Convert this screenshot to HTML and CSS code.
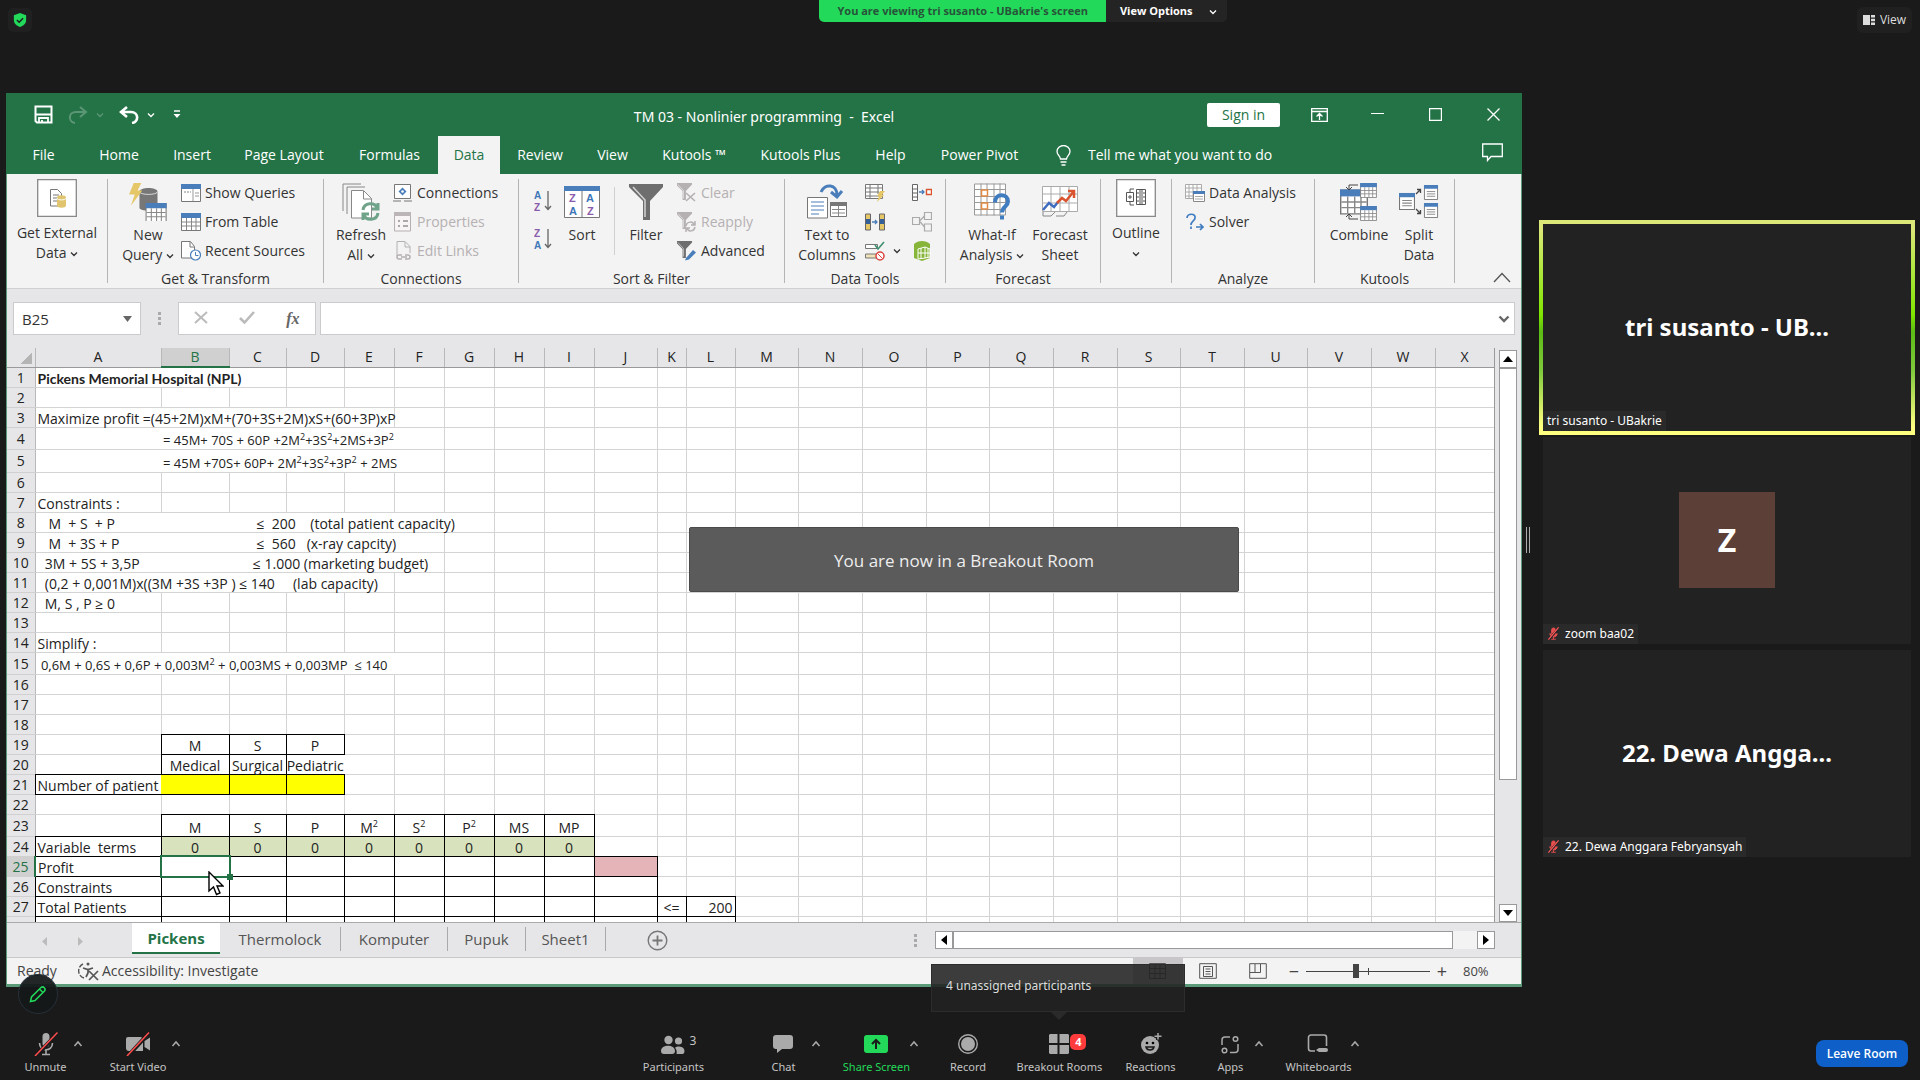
FILE: index.html
```html
<!DOCTYPE html>
<html lang="en">
<head>
    <meta charset="UTF-8">
    <meta name="viewport" content="width=device-width, initial-scale=1.0">
    <title>Zoom Meeting</title>
    <link rel="stylesheet" href="styles.css">
</head>
<body>
    <svg class="sprite" aria-hidden="true">
        <symbol id="down" viewBox="0 0 8 6"><path d="M1 1.5l3 3 3-3" fill="none" stroke="currentColor" stroke-width="1.3"/></symbol>
        <symbol id="up" viewBox="0 0 10 8"><path d="M1.5 6L5 2l3.5 4" fill="none" stroke="currentColor" stroke-width="1.5"/></symbol>
        <symbol id="muted" viewBox="0 0 12 14">
            <path d="M4 3a2 2 0 0 1 4 0v4a2 2 0 0 1-4 0zM2 7c0 5 8 5 8 0M6 11v2M3.5 13.2h5" fill="#e8504f" stroke="#e8504f" stroke-width="1"/>
            <path d="M11.5 1L1 13.5" stroke="#222" stroke-width="2.5"/><path d="M11.5 .5L.5 13.5" stroke="#ff5a5a" stroke-width="1.3"/>
        </symbol>
        <symbol id="minitable" viewBox="0 0 20 18">
            <path d="M.5 .5h19v17H.5z" fill="#fff" stroke="#777"/><path d="M0 0h20v5H0z" fill="#4a7ebb"/>
            <path d="M1 9h18M1 13h18M5.5 5v12M10.5 5v12M15 5v12" stroke="#888" fill="none"/>
        </symbol>
        <symbol id="minilist" viewBox="0 0 15 16">
            <path d="M.5 .5h14v15H.5z" fill="#fff" stroke="#777"/><path d="M0 0h15v4H0z" fill="#4a7ebb"/>
            <path d="M3 7h9M3 9.5h9M3 12h9" stroke="#888"/>
        </symbol>
        <symbol id="funnel" viewBox="0 0 34 36"><path d="M0 0h34v3L21 17v19h-7V17L0 3z" fill="currentColor"/><path d="M4 3l12 13v17" fill="none" stroke="#fff" stroke-width="1.5" opacity=".7"/></symbol>
    </svg>

    <header class="top">
        <button class="shield" aria-label="Meeting information"><svg width="14" height="14" viewBox="0 0 16 16"><path d="M8 0l7 2.5V8c0 4-3 6.5-7 8-4-1.5-7-4-7-8V2.5z" fill="#23d959"/><path d="M4.5 8l2.5 2.5L11.5 6" fill="none" stroke="#1a1a1a" stroke-width="1.6"/></svg></button>
        <div class="banner">
            <p class="viewing">You are viewing tri susanto - UBakrie's screen</p>
            <button class="options">View Options <svg class="caret"><use href="#down"/></svg></button>
        </div>
        <button class="view"><svg viewBox="0 0 12 10"><path d="M0 0h7v10H0zM8 0h4v2.6H8zM8 3.7h4v2.6H8zM8 7.4h4V10H8z" fill="#ddd"/></svg>View</button>
    </header>

    <main class="main">
        <section class="excel">
            <div class="titlebar">
                <div class="quick">
                    <button aria-label="Save"><svg width="19" height="19" viewBox="0 0 19 19"><path d="M1.5 1.5h16v16H3l-1.5-1.5z" fill="none" stroke="#fff" stroke-width="2"/><path d="M2 9.5h15M5 18v-5h9v5M8 15v3" fill="none" stroke="#fff" stroke-width="1.8"/></svg></button>
                    <button aria-label="Redo" class="faded"><svg width="20" height="18" viewBox="0 0 20 18"><path d="M12 1l6 5-6 5M17 6H8c-8 0-8 10-1 11" fill="none" stroke="#fff" stroke-width="2"/></svg><svg class="caret"><use href="#down"/></svg></button>
                    <button aria-label="Undo"><svg width="20" height="18" viewBox="0 0 20 18"><path d="M8 1L2 6l6 5M3 6h9c8 0 8 10 1 11" fill="none" stroke="#fff" stroke-width="2.6"/></svg><svg class="caret"><use href="#down"/></svg></button>
                    <button aria-label="Customize"><svg width="8" height="9" viewBox="0 0 8 9"><path d="M1 1h6" stroke="#fff" stroke-width="1.5"/><path d="M.5 4h7L4 8z" fill="#fff"/></svg></button>
                </div>
                <h1>TM 03 - Nonlinier programming&nbsp; -&nbsp; Excel</h1>
                <div class="controls">
                    <button class="signin">Sign in</button>
                    <button aria-label="Ribbon display"><svg width="17" height="14" viewBox="0 0 17 14"><path d="M.7 .7h15.6v12.6H.7zM1 3.5h15M8.5 12V6M5.5 8.5l3-3 3 3" fill="none" stroke="#fff" stroke-width="1.3"/></svg></button>
                    <button aria-label="Minimize"><svg width="13" height="13" viewBox="0 0 13 13"><path d="M0 5.5h13" stroke="#fff"/></svg></button>
                    <button aria-label="Maximize"><svg width="13" height="13" viewBox="0 0 13 13"><path d="M.6 .6h11.8v11.8H.6z" fill="none" stroke="#fff" stroke-width="1.2"/></svg></button>
                    <button aria-label="Close"><svg width="13" height="13" viewBox="0 0 13 13"><path d="M.5 .5l12 12M12.5 .5l-12 12" stroke="#fff" stroke-width="1.3"/></svg></button>
                </div>
            </div>

            <nav class="tabs">
                <button>File</button><button>Home</button><button>Insert</button><button>Page Layout</button><button>Formulas</button><button class="active">Data</button><button>Review</button><button>View</button><button>Kutools ™</button><button>Kutools Plus</button><button>Help</button><button>Power Pivot</button>
                <button class="tell"><svg width="15" height="21" viewBox="0 0 15 21"><path d="M4.5 14c0-3-3.5-4-3.5-7.5a6.5 6 0 0 1 13 0c0 3.5-3.5 4.5-3.5 7.5zM4.5 17h6M5.5 20h4" fill="none" stroke="#fff" stroke-width="1.3"/></svg>Tell me what you want to do</button>
                <button class="comment" aria-label="Comments"><svg width="21" height="19" viewBox="0 0 21 19"><path d="M.7 1h19.6v12.5H9l-3.5 4v-4H.7z" fill="none" stroke="#fff" stroke-width="1.3"/></svg></button>
            </nav>

            <div class="ribbon">
                <div class="group g-external">
                    <div class="body">
                        <button class="big boxed"><svg class="ic" width="40" height="38" viewBox="0 0 40 38"><path d="M.7 .7h38.6v36.6H.7z" fill="#fff" stroke="#888" stroke-width="1.3"/><path d="M13.5 10.5h7l4 4V27h-11z" fill="#fff" stroke="#777"/><path d="M16 16h6M16 19h4M16 22h4" stroke="#777"/><path d="M20 18.5c0-3 9-3 9 0v8c0 3-9 3-9 0z" fill="#e0c56e"/><path d="M20 19c0 2.5 9 2.5 9 0" fill="none" stroke="#fff"/></svg><span>Get External<br>Data <svg class="caret"><use href="#down"/></svg></span></button>
                    </div>
                </div>
                <div class="group g-transform">
                    <div class="body">
                        <button class="big"><svg class="ic" width="40" height="40" viewBox="0 0 40 40"><path d="M11 9c0-5 19-5 19 0v17c0 4-19 4-19 0z" fill="#777"/><path d="M11 9c0 4 19 4 19 0" fill="none" stroke="#ddd"/><path d="M5 0h8L9 8h5L2 24l4-12H0z" fill="#e6c768"/><use href="#minitable" x="17" y="21" width="23" height="20"/></svg><span>New<br>Query <svg class="caret"><use href="#down"/></svg></span></button>
                        <div class="stack">
                            <button><svg viewBox="0 0 20 18"><path d="M.5 .5h19v17H.5z" fill="#fff" stroke="#777"/><path d="M0 0h20v5H0z" fill="#4a7ebb"/><path d="M12 5v12M14 9h4M14 12h4" stroke="#999"/><path d="M3 8h7" stroke="#888" stroke-dasharray="2 1"/></svg>Show Queries</button>
                            <button><svg viewBox="0 0 20 18"><use href="#minitable"/></svg>From Table</button>
                            <button><svg viewBox="0 0 20 20"><path d="M.5 .5h9l4 5V17H.5z" fill="#fff" stroke="#777"/><path d="M9 1v5h4" fill="none" stroke="#777"/><circle cx="14.5" cy="14" r="5" fill="#fff" stroke="#4a7ebb" stroke-width="1.2"/><path d="M14.5 11v3.5h3" fill="none" stroke="#4a7ebb"/></svg>Recent Sources</button>
                        </div>
                    </div>
                    <p>Get &amp; Transform</p>
                </div>
                <div class="group g-connections">
                    <div class="body">
                        <button class="big"><svg class="ic" width="38" height="38" viewBox="0 0 38 38"><path d="M1 28V1h18M5 31V4h18" fill="none" stroke="#888"/><path d="M9.5 7.5h12l8 8V35h-20z" fill="#fff" stroke="#888"/><path d="M21.5 8v8h8" fill="none" stroke="#888"/><path d="M21 27c1-8 12-8 14-2M36 20v6h-6M36 30c-1 8-12 8-14 2M21 37v-6h6" fill="none" stroke="#6fa48a" stroke-width="3"/></svg><span>Refresh<br>All <svg class="caret"><use href="#down"/></svg></span></button>
                        <div class="stack">
                            <button><svg viewBox="0 0 20 18"><path d="M1.5 .5h16v14h-16zM0 17h8M11 17h8" fill="#fff" stroke="#777"/><path d="M9.5 3.5l4 4-4 4-4-4z" fill="#4a7ebb"/><circle cx="9.5" cy="7.5" r="1.3" fill="#fff"/></svg>Connections</button>
                            <button disabled><svg viewBox="0 0 20 20"><path d="M1.5 1h16v18h-16z" fill="#f8f3f5" stroke="#b5b0b2"/><path d="M1 0h17v4H1z" fill="#bbb5b8"/><path d="M5 9h2M5 14h2M10 9h5M10 14h5" stroke="#aaa" stroke-width="2"/></svg>Properties</button>
                            <button disabled><svg viewBox="0 0 20 20"><path d="M4 15V.5h8l5 5V12M12 1v5h5" fill="none" stroke="#b5b0b2"/><path d="M9 18H6a2 2 0 0 1 0-4h3M12 14h3a2 2 0 0 1 0 4h-3M8 16h6" fill="none" stroke="#b5b0b2" stroke-width="1.5"/></svg>Edit Links</button>
                        </div>
                    </div>
                    <p>Connections</p>
                </div>
                <div class="group g-sort">
                    <div class="body">
                        <div class="az">
                            <button aria-label="Sort A to Z"><svg width="19" height="24" viewBox="0 0 19 24"><text x="0" y="10" class="sa">A</text><text x="0" y="22" class="sz">Z</text><path d="M14 2v18M11 17l3 3.5 3-3.5" fill="none" stroke="#666" stroke-width="1.3"/></svg></button>
                            <button aria-label="Sort Z to A"><svg width="19" height="24" viewBox="0 0 19 24"><text x="0" y="10" class="sz">Z</text><text x="0" y="22" class="sa">A</text><path d="M14 2v18M11 17l3 3.5 3-3.5" fill="none" stroke="#666" stroke-width="1.3"/></svg></button>
                        </div>
                        <button class="big sort"><svg class="ic" width="36" height="32" viewBox="0 0 36 32"><path d="M.5 .5h35v31H.5z" fill="#fff" stroke="#777"/><path d="M0 0h36v5H0z" fill="#4a7ebb"/><path d="M18 5v26" stroke="#777"/><text x="5" y="16" class="sz">Z</text><text x="5" y="29" class="sa">A</text><text x="22" y="16" class="sa">A</text><text x="23" y="29" class="sz">Z</text></svg><span>Sort</span></button>
                        <i class="line"></i>
                        <button class="big filter"><svg class="ic grey" width="34" height="34"><use href="#funnel"/></svg><span>Filter</span></button>
                        <div class="stack">
                            <button disabled><svg viewBox="0 0 20 20"><use href="#funnel" x="-2" width="18" height="17"/><path d="M9 10l9 8M18 10l-9 8" stroke="#b5b0b2" stroke-width="1.6"/></svg>Clear</button>
                            <button disabled><svg viewBox="0 0 20 20"><use href="#funnel" x="-2" width="18" height="17"/><path d="M9 14c1-5 7-5 8-1M18 9v4h-4M18 15c-1 5-7 5-8 1M9 20v-4h4" fill="none" stroke="#b5b0b2" stroke-width="1.5"/></svg>Reapply</button>
                            <button><svg viewBox="0 0 20 20" class="grey"><use href="#funnel" x="-2" width="18" height="17"/><path d="M9 17l7-8 3 2.5-7 7-4 1z" fill="#4a7ebb"/></svg>Advanced</button>
                        </div>
                    </div>
                    <p>Sort &amp; Filter</p>
                </div>
                <div class="group g-tools">
                    <div class="body">
                        <button class="big"><svg class="ic" width="40" height="36" viewBox="0 0 40 36"><path d="M.5 13.5h20V34H.5z" fill="#fff" stroke="#777"/><path d="M4 18h13M4 22h13M4 26h13M4 30h8" stroke="#4a7ebb"/><path d="M23.5 18.5h16v14h-16z" fill="#fff" stroke="#777"/><path d="M23 18h17v4H23z" fill="#777"/><path d="M31.5 22v10M25 25.5h13M25 29h13" stroke="#888"/><path d="M14 8C18-1 30 0 30 11M24 8l6 5 5-6" fill="none" stroke="#4a7ebb" stroke-width="3"/></svg><span>Text to<br>Columns</span></button>
                        <div class="minis">
                            <button aria-label="Flash Fill"><svg viewBox="0 0 20 18"><path d="M.5 .5h17v14H.5zM0 4h18M0 8h14M0 12h14M5 0v15M13 0v10" fill="#fff" stroke="#777"/><path d="M15 7h5l-3 4h2l-7 7 2-6h-2z" fill="#e6c768"/></svg></button>
                            <button aria-label="Consolidate"><svg viewBox="0 0 20 18"><path d="M.5 .5h5v16h-5zM.5 5h5M.5 9h5M.5 13h5" fill="#fff" stroke="#666"/><path d="M7 8h5M10 6l2 2-2 2" fill="none" stroke="#4a7ebb" stroke-width="1.3"/><path d="M14.5 5.5h5v5h-5z" fill="#fff" stroke="#d9542f" stroke-width="1.4"/></svg></button>
                            <button aria-label="Remove Duplicates"><svg viewBox="0 0 20 18"><path d="M.5 1h5v16h-5zM14.5 1h5v16h-5z" fill="#e6c768" stroke="#666"/><path d="M1 6h4v5H1zM15 6h4v5h-4z" fill="#345f99"/><path d="M7 9h5M10 7l2 2-2 2" fill="none" stroke="#4a7ebb" stroke-width="1.3"/></svg></button>
                            <button aria-label="Relationships" disabled><svg viewBox="0 0 20 20"><path d="M.5 5.5h7v7h-7zM12.5 .5h7v7h-7zM12.5 12h7v7h-7zM7.5 9l5-5M7.5 9l5 6" fill="none" stroke="#aaa" stroke-width="1.2"/></svg></button>
                            <button aria-label="Data Validation"><svg viewBox="0 0 20 20"><path d="M.5 3.5h12v4H.5z" fill="#fff" stroke="#777"/><path d="M.5 13h12v4H.5z" fill="#f0e2b8" stroke="#777"/><path d="M10 4l3 4 6-7" fill="none" stroke="#3f9070" stroke-width="1.6"/><circle cx="15" cy="15" r="4" fill="#fff" stroke="#d9443f" stroke-width="1.5"/><path d="M12.5 12.5l5 5" stroke="#d9443f"/></svg><svg class="caret"><use href="#down"/></svg></button>
                            <button aria-label="Data Model"><svg viewBox="0 0 20 20"><path d="M2 3c4-4 12-4 16 0v14l-8 3-8-3z" fill="#86b53a"/><path d="M6 8l7-2v11l-7 1zM13 6l5 2v8l-5 1M6 12h12M9 7v11M16 7v9" fill="none" stroke="#fff"/></svg></button>
                        </div>
                    </div>
                    <p>Data Tools</p>
                </div>
                <div class="group g-forecast">
                    <div class="body">
                        <button class="big whatif"><svg class="ic" width="36" height="37" viewBox="0 0 36 37"><path d="M.5 .5h31v31H.5zM0 6h32M0 13h32M0 19h32M0 26h32M7 0v32M13 0v32M20 0v32M26 0v32" fill="#fff" stroke="#999"/><path d="M7.5 6.5h6v6h-6zM7.5 19.5h6v6h-6z" fill="#fff" stroke="#e08a45" stroke-width="1.5"/><path d="M21 19c0-10 13-9 13-1 0 5-6 5-6 11M28 32v4" fill="none" stroke="#3f7cc0" stroke-width="4"/></svg><span>What-If<br>Analysis <svg class="caret"><use href="#down"/></svg></span></button>
                        <button class="big sheet-b"><svg class="ic" width="36" height="32" viewBox="0 0 36 32"><path d="M.5 .5h35v25H.5zM0 8h36M0 17h36M9 0v26M18 0v26M27 0v26" fill="#fff" stroke="#aaa"/><path d="M1 26v4h8l4-4M14 30h8l3-4" fill="none" stroke="#888"/><path d="M1 24l6-7 5 4 4-5" fill="none" stroke="#3f6cc0" stroke-width="2.5"/><path d="M15 17l5-5 4 3 8-10M26 5h6v7" fill="none" stroke="#d9542f" stroke-width="2.5"/></svg><span>Forecast<br>Sheet</span></button>
                    </div>
                    <p>Forecast</p>
                </div>
                <div class="group g-outline">
                    <div class="body">
                        <button class="big boxed"><svg class="ic" width="40" height="38" viewBox="0 0 40 38"><path d="M.7 .7h38.6v36.6H.7z" fill="#fff" stroke="#888" stroke-width="1.3"/><path d="M10.5 13.5h7v9h-7zM12 18h4M14 16v4M14 13v-3h4M14 23v3h4M20.5 10.5h9v15h-9zM20 14h10M20 18h10M20 22h10M23 12h4M23 16h4M23 20h4M23 24h4" fill="none" stroke="#555"/></svg><span>Outline<br><svg class="caret"><use href="#down"/></svg></span></button>
                    </div>
                </div>
                <div class="group g-analyze">
                    <div class="body">
                        <div class="stack">
                            <button><svg viewBox="0 0 20 18"><path d="M.5 .5h16v14H.5zM0 4h17M0 8h17M0 12h17M4 0v14M8 0v14M12 0v14" fill="#fff" stroke="#aaa"/><path d="M8.5 8h11v9.5h-11z" fill="#fff" stroke="#888"/><path d="M8 7h12v3H8z" fill="#4a7ebb"/><path d="M10 12.5h8M10 15h8" stroke="#aaa"/></svg>Data Analysis</button>
                            <button><svg viewBox="0 0 20 18"><path d="M2 5c0-5 9-5 8 0 0 3-4 3-4 7M6 13.5v2.5M11 14h7M15 11l3 3-3 3" fill="none" stroke="#3f7cc0" stroke-width="1.7"/></svg>Solver</button>
                        </div>
                    </div>
                    <p>Analyze</p>
                </div>
                <div class="group g-kutools">
                    <div class="body">
                        <button class="big combine"><svg class="ic" width="38" height="38" viewBox="0 0 38 38"><use href="#minitable" x="0" y="6" width="28" height="26"/><use href="#minitable" x="20" y="0" width="17" height="15"/><use href="#minitable" x="20" y="23" width="17" height="15"/><path d="M18 2H9v4M6 4l3 3 3-3M18 36H9v-4M6 34l3-3 3 3" fill="none" stroke="#444"/></svg><span>Combine</span></button>
                        <button class="big split"><svg class="ic" width="40" height="34" viewBox="0 0 40 34"><use href="#minilist" x="0" y="6" width="16" height="21"/><use href="#minilist" x="24" y="0" width="16" height="15"/><use href="#minilist" x="24" y="18" width="16" height="15"/><path d="M17 9l4-4M18 4.5h3.5V8M17 24l4 4M21.5 25v3.5H18" fill="none" stroke="#444" stroke-width="1.3"/></svg><span>Split<br>Data</span></button>
                    </div>
                    <p>Kutools</p>
                </div>
                <button class="collapse" aria-label="Collapse ribbon"><svg width="18" height="11" viewBox="0 0 18 11"><path d="M1 10l8-8.5L17 10" fill="none" stroke="#555" stroke-width="1.3"/></svg></button>
            </div>

            <div class="formula">
                <div class="namebox"><input type="text" value="B25" aria-label="Name box"><svg width="9" height="6" viewBox="0 0 9 6"><path d="M0 0h9L4.5 6z" fill="#666"/></svg></div>
                <i class="dots"></i>
                <div class="fx">
                    <button aria-label="Cancel"><svg width="14" height="13" viewBox="0 0 14 13"><path d="M1 1l12 11M13 1L1 12" stroke="#bbb" stroke-width="2"/></svg></button>
                    <button aria-label="Enter"><svg width="16" height="13" viewBox="0 0 16 13"><path d="M1 7l4.5 4.5L15 1" fill="none" stroke="#bbb" stroke-width="2.6"/></svg></button>
                    <button aria-label="Insert function" class="fn">fx</button>
                </div>
                <div class="bar"><input type="text" aria-label="Formula bar"><svg width="12" height="8" viewBox="0 0 12 8"><path d="M1.5 1.5L6 6l4.5-4.5" fill="none" stroke="#666" stroke-width="2.4"/></svg></div>
            </div>

            <div class="sheet">
                <div class="gridwrap"><table class="grid" id="grid"></table></div>
                <div class="vscroll">
                    <button aria-label="Scroll up"><svg width="10" height="6" viewBox="0 0 10 6"><path d="M5 0l5 6H0z"/></svg></button>
                    <i class="thumb"></i>
                    <button class="end" aria-label="Scroll down"><svg width="10" height="6" viewBox="0 0 10 6"><path d="M5 6l5-6H0z"/></svg></button>
                </div>
            </div>

            <div class="sheetbar">
                <button class="move" aria-label="Previous sheet"><svg width="5" height="9" viewBox="0 0 5 9"><path d="M5 0v9L0 4.5z" fill="#bbb"/></svg></button>
                <button class="move" aria-label="Next sheet"><svg width="5" height="9" viewBox="0 0 5 9"><path d="M0 0v9l5-4.5z" fill="#bbb"/></svg></button>
                <button class="name current">Pickens</button>
                <button class="name s-thermo">Thermolock</button>
                <button class="name s-komp">Komputer</button>
                <button class="name s-pupuk">Pupuk</button>
                <button class="name s-one">Sheet1</button>
                <button class="add" aria-label="New sheet"><svg width="21" height="21" viewBox="0 0 21 21"><circle cx="10.5" cy="10.5" r="9.3" fill="none" stroke="#777" stroke-width="1.4"/><path d="M5.5 10.5h10M10.5 5.5v10" stroke="#777" stroke-width="1.8"/></svg></button>
                <i class="dots"></i>
                <div class="hscroll">
                    <button aria-label="Scroll left"><svg width="6" height="10" viewBox="0 0 6 10"><path d="M6 0v10L0 5z"/></svg></button>
                    <i class="thumb"></i>
                    <button aria-label="Scroll right"><svg width="6" height="10" viewBox="0 0 6 10"><path d="M0 0v10l6-5z"/></svg></button>
                </div>
            </div>

            <div class="status">
                <span class="ready">Ready</span>
                <span class="access"><svg width="21" height="19" viewBox="0 0 21 19"><path d="M6 16A7.5 7.5 0 0 1 5 2" fill="none" stroke="#555" stroke-width="1.4" stroke-dasharray="5 1.5"/><circle cx="10" cy="2" r="1.5" fill="#555"/><path d="M5 6l5 1.5L15 6M10 7v4l-2 4M11 9l9 9M20 9l-9 9" fill="none" stroke="#555" stroke-width="1.7"/></svg>Accessibility: Investigate</span>
                <div class="views">
                    <button class="on" aria-label="Normal"><svg width="18" height="16" viewBox="0 0 18 16"><path d="M.5 .5h16v15H.5zM0 5.5h17M0 10.5h17M6 0v16M11 0v16" fill="none" stroke="#555"/></svg></button>
                    <button aria-label="Page layout"><svg width="18" height="16" viewBox="0 0 18 16"><path d="M.7 .7h16.6v14.6H.7zM4.5 3.5h9v10h-9zM6.5 6h5M6.5 8.5h5M6.5 11h5" fill="none" stroke="#555"/></svg></button>
                    <button aria-label="Page break"><svg width="18" height="16" viewBox="0 0 18 16"><path d="M.7 .7h16.6v14.6H.7zM1 9.5h10.5V1M6 1v8" fill="none" stroke="#555"/></svg></button>
                </div>
                <div class="zoom">
                    <button aria-label="Zoom out">−</button>
                    <input type="range" min="0" max="100" value="40" aria-label="Zoom">
                    <button aria-label="Zoom in">+</button>
                    <span>80%</span>
                </div>
            </div>
            <div class="toast">You are now in a Breakout Room</div>
        </section>

        <div class="handle"></div>

        <aside class="people">
            <div class="tile talking"><h2>tri susanto - UB...</h2><p>tri susanto - UBakrie</p></div>
            <div class="tile"><i class="avatar">Z</i><p><svg><use href="#muted"/></svg>zoom baa02</p></div>
            <div class="tile"><h2>22. Dewa Angga...</h2><p><svg><use href="#muted"/></svg>22. Dewa Anggara Febryansyah</p></div>
        </aside>
    </main>

    <footer class="toolbar">
        <button class="pen" aria-label="Annotate"><svg width="18" height="18" viewBox="0 0 18 18"><path d="M1.5 16.5l1-4.5L12 2.5a2.5 2.5 0 0 1 3.5 3.5L6 15.5zM10.5 4l3.5 3.5" fill="none" stroke="#23d959" stroke-width="1.5"/></svg></button>
        <div class="tools">
            <button class="tool t-mute"><svg width="24" height="24" viewBox="0 0 24 24"><path d="M8.5 4.5a3.5 3.5 0 0 1 7 0v7a3.5 3.5 0 0 1-7 0z" fill="#aaa"/><path d="M5.5 11c0 9 13 9 13 0M12 18v4M8 22.5h8" fill="none" stroke="#aaa" stroke-width="1.6"/><path d="M24 1L2 24" stroke="#1a1a1a" stroke-width="4"/><path d="M23.5 .5L1 24" stroke="#ff4d4d" stroke-width="1.5"/></svg>Unmute</button>
            <button class="more" aria-label="Audio options"><svg><use href="#up"/></svg></button>
            <button class="tool t-video"><svg width="26" height="24" viewBox="0 0 26 24"><path d="M3 5h12a3 3 0 0 1 3 3v11H4a3 3 0 0 1-3-3V7a2 2 0 0 1 2-2zM19.5 9L25 5.5v13L19.5 15z" fill="#aaa"/><path d="M24 1L3 24" stroke="#1a1a1a" stroke-width="4"/><path d="M24 .5L2 24" stroke="#ff4d4d" stroke-width="1.5"/></svg>Start Video</button>
            <button class="more" aria-label="Video options"><svg><use href="#up"/></svg></button>
        </div>
        <div class="tools center">
            <button class="tool t-people"><svg width="24" height="24" viewBox="0 0 24 24"><circle cx="7.5" cy="8" r="4.2" fill="#aaa"/><circle cx="17.5" cy="9" r="3.6" fill="#aaa"/><path d="M0 19c0-7 14-7 14 0 0 2-1 3-3 3H3c-2 0-3-1-3-3zM15.5 22H22c2-1 3-7-4-7.5-2 0-3 .5-4 1.2 1.5 1.8 2 3.5 1.5 6.3z" fill="#aaa"/></svg>Participants<b class="count">3</b></button>
            <button class="tool t-chat"><svg width="24" height="24" viewBox="0 0 24 24"><path d="M5 3h14a3 3 0 0 1 3 3v8a3 3 0 0 1-3 3h-8l-5 4v-4H5a3 3 0 0 1-3-3V6a3 3 0 0 1 3-3z" fill="#aaa"/></svg>Chat</button>
            <button class="more" aria-label="Chat options"><svg><use href="#up"/></svg></button>
            <button class="tool t-share"><svg width="24" height="24" viewBox="0 0 24 24"><rect y="3" width="24" height="18" rx="3" fill="#23d959"/><path d="M12 17V8M8 12l4-4 4 4" fill="none" stroke="#1a1a1a" stroke-width="2"/></svg>Share Screen</button>
            <button class="more" aria-label="Share options"><svg><use href="#up"/></svg></button>
            <button class="tool t-record"><svg width="24" height="24" viewBox="0 0 24 24"><circle cx="12" cy="12" r="9.3" fill="none" stroke="#aaa" stroke-width="1.4"/><circle cx="12" cy="12" r="7" fill="#aaa"/></svg>Record</button>
            <button class="tool t-rooms"><svg width="24" height="24" viewBox="0 0 24 24"><path d="M3 2h7.5v9H2V3zM12.5 2H21l1 1v8h-9.5zM2 13h8.5v9H3l-1-1zM12.5 13H22v8l-1 1h-8.5z" fill="#aaa"/></svg>Breakout Rooms<b class="badge">4</b></button>
            <button class="tool t-react"><svg width="24" height="24" viewBox="0 0 24 24"><circle cx="12" cy="13" r="9" fill="#aaa"/><circle cx="9" cy="11" r="1.3"/><circle cx="15" cy="11" r="1.3"/><path d="M8 15c1 4 7 4 8 0z" stroke="#1a1a1a" fill="none" stroke-width="1.5"/><path d="M20 0v8M16.5 4h7" stroke="#1a1a1a" stroke-width="4"/><path d="M20 1v6.5M16.5 4.2h7" stroke="#aaa" stroke-width="1.5"/></svg>Reactions</button>
            <button class="tool t-apps"><svg width="24" height="24" viewBox="0 0 24 24"><circle cx="17.5" cy="7" r="2.3"/><circle cx="6.5" cy="18.5" r="2.3"/><path d="M12 5H7a3 3 0 0 0-3 3v5M12 20.5h5a3 3 0 0 0 3-3V12"/></svg>Apps</button>
            <button class="more" aria-label="Apps options"><svg><use href="#up"/></svg></button>
            <button class="tool t-board"><svg width="24" height="24" viewBox="0 0 24 24"><path d="M9 19H5a2.5 2.5 0 0 1-2.5-2.5v-11A2.5 2.5 0 0 1 5 3h13a2.5 2.5 0 0 1 2.5 2.5V14" fill="none" stroke="#aaa" stroke-width="1.6"/><path d="M13 16h7a2 2 0 0 1 0 4h-7l-3-2z" fill="#aaa"/></svg>Whiteboards</button>
            <button class="more" aria-label="Whiteboard options"><svg><use href="#up"/></svg></button>
        </div>
        <button class="leave">Leave Room</button>
    </footer>
    <div class="tip">4 unassigned participants</div>

    <script>
        const cols = ["A", "B", "C", "D", "E", "F", "G", "H", "I", "J", "K", "L", "M", "N", "O", "P", "Q", "R", "S", "T", "U", "V", "W", "X"]
        const widths = [126, 68, 57, 58, 50, 50, 50, 50, 50, 63, 29, 49, 63, 64, 64, 63, 64, 64, 63, 64, 63, 64, 64, 59]
        const heights = { 4: 22, 5: 23, 15: 22, 23: 22 }
        // row -> column -> [text, class, colspan]
        const cells = {
            1: { A: ["Pickens Memorial Hospital (NPL)", "bold", 3] },
            3: { A: ["Maximize profit =(45+2M)xM+(70+3S+2M)xS+(60+3P)xP", "", 5] },
            4: { A: ["", "open"], B: ["= 45M+ 70S + 60P +2M<sup>2</sup>+3S<sup>2</sup>+2MS+3P<sup>2</sup>", "math", 5] },
            5: { A: ["", "open"], B: ["= 45M +70S+ 60P+ 2M<sup>2</sup>+3S<sup>2</sup>+3P<sup>2</sup> + 2MS", "math", 5] },
            7: { A: ["Constraints :"] },
            8: { A: ["   M  + S  + P", "open", 2], C: ["       ≤  200    (total patient capacity)", "", 5] },
            9: { A: ["   M  + 3S + P", "open", 2], C: ["       ≤  560   (x-ray capcity)", "", 4] },
            10: { A: ["  3M + 5S + 3,5P", "open", 2], C: ["      ≤ 1.000 (marketing budget)", "", 4] },
            11: { A: ["  (0,2 + 0,001M)x((3M +3S +3P ) ≤ 140     (lab capacity)", "", 5] },
            12: { A: ["  M, S , P ≥ 0"] },
            14: { A: ["Simplify :"] },
            15: { A: [" 0,6M + 0,6S + 0,6P + 0,003M<sup>2</sup> + 0,003MS + 0,003MP  ≤ 140", "math", 6] },
            19: { B: ["M", "box mid"], C: ["S", "box mid"], D: ["P", "box mid"] },
            20: { B: ["Medical", "box mid"], C: ["Surgical", "box mid"], D: ["Pediatric", "box mid open"] },
            21: { A: ["Number of patient", "box over"], B: ["", "box yellow"], C: ["", "box yellow"], D: ["", "box yellow"] },
            23: {}, 24: { A: ["Variable  terms", "box"] },
            25: { A: ["Profit", "box"], J: ["", "box pink"] },
            26: { A: ["Constraints", "box"], J: ["", "box"] },
            27: { A: ["Total Patients", "box"], J: ["", "box"], K: ["&lt;=", "box mid"], L: ["200", "box right"] },
            28: { A: ["", "box"], J: ["", "box"], K: ["", "box"], L: ["", "box"] }
        }
        const terms = ["M", "S", "P", "M<sup>2</sup>", "S<sup>2</sup>", "P<sup>2</sup>", "MS", "MP"]
        terms.forEach(function(term, i) {
            const c = cols[i + 1]
            cells[23][c] = [term, "box mid"]
            cells[24][c] = ["0", "box mid green"]
            for (let r = 25; r <= 28; r++) {
                cells[r][c] = ["", "box"]
            }
        })
        cells[25].B = [`<i class="select"></i><svg class="cursor" viewBox="0 0 16 25"><path d="M1 1v19l4.5-4 3 7.5 3.5-1.5-3-7h6z" fill="#fff" stroke="#000" stroke-width="1.4"/></svg>`, "box sel"]

        let html = `<colgroup><col style="width: 28px">`
        widths.forEach(w => html += `<col style="width: ${w}px">`)
        html += `</colgroup><thead><tr><th class="corner"></th>`
        cols.forEach(c => html += `<th class="${c === "B" ? "hot" : ""}">${c}</th>`)
        html += `</tr></thead><tbody>`
        for (let r = 1; r <= 28; r++) {
            // row 28 is only the strip that shows above the sheet names
            html += `<tr style="height: ${heights[r] || 20}px"><th class="${r === 25 ? "hot" : ""}">${r < 28 ? r : ""}</th>`
            for (let i = 0; i < cols.length; i++) {
                const cell = (cells[r] || {})[cols[i]] || [""]
                const span = cell[2] || 1
                html += `<td class="${cell[1] || ""}" colspan="${span}">${cell[0]}</td>`
                i += span - 1
            }
            html += `</tr>`
        }
        document.querySelector("#grid").innerHTML = html + `</tbody>`
    </script>
</body>
</html>
```
FILE: styles.css
```css
* {
    box-sizing: border-box;
}

body {
    margin: 0;
    min-height: 100vh;
    display: flex;
    flex-direction: column;
    position: relative;
    background: #1a1a1a;
    color: #333;
    font: 14px/20px "Open Sans", "Noto Sans", sans-serif;
    overflow: hidden;
}

button {
    font: inherit;
    color: inherit;
    background: none;
    border: none;
    padding: 0;
    cursor: pointer;
    white-space: nowrap;
}

input {
    font: inherit;
    color: inherit;
    border: none;
    outline: none;
    background: none;
    min-width: 0;
}

h1, h2, p {
    margin: 0;
    font-weight: 400;
}

svg {
    flex: none;
}

.sprite {
    position: absolute;
    width: 0;
    height: 0;
}

.caret {
    width: 8px;
    height: 6px;
    vertical-align: middle;
}

/* top strip */
.top {
    height: 93px;
    display: flex;
    align-items: flex-start;
}

.shield {
    width: 24px;
    height: 24px;
    margin: 8px 0 0 8px;
    border-radius: 5px;
    background: #202020;
    display: flex;
    align-items: center;
    justify-content: center;
}

.banner {
    display: flex;
    height: 22px;
    margin-left: 41%;
    border-radius: 0 0 5px 5px;
    overflow: hidden;
    font-size: 11px;
    font-weight: 700;
    line-height: 22px;
}

.viewing {
    width: 287px;
    text-align: center;
    font-weight: 700;
    background: #23d959;
    color: #27533a;
    white-space: nowrap;
}

.options {
    width: 121px;
    padding-left: 4px;
    background: #242424;
    color: #fff;
}

.options .caret {
    margin-left: 14px;
}

.view {
    width: 55px;
    height: 26px;
    margin: 7px 8px 0 auto;
    border-radius: 6px;
    background: #202020;
    color: #ddd;
    font-size: 12px;
    display: flex;
    align-items: center;
    justify-content: center;
    gap: 5px;
}

.view svg {
    width: 12px;
    height: 10px;
}

/* shared window */
.main {
    flex: 1;
    display: flex;
    padding: 0 9px 0 6px;
}

.excel {
    flex: 1;
    min-width: 0;
    height: 894px;
    display: flex;
    flex-direction: column;
    position: relative;
    background: #e6e6e8;
    border: 1px solid #5a9a78;
    border-width: 0 1px 3px;
}

.titlebar {
    height: 43px;
    display: grid;
    grid-template-columns: 1fr auto 1fr;
    align-items: center;
    background: #247347;
    color: #fff;
    margin: 0 -1px;
}

.titlebar h1 {
    font: 14px/20px "Noto Sans", sans-serif;
    padding-top: 4px;
}

.quick {
    display: flex;
    align-items: center;
    gap: 15px;
    padding-left: 28px;
}

.quick button {
    display: flex;
    align-items: center;
    gap: 8px;
}

.quick button:last-child {
    margin-left: 3px;
}

.quick .faded {
    opacity: .25;
}

.controls {
    display: flex;
    align-items: center;
    justify-content: flex-end;
}

.controls button {
    width: 58px;
    display: flex;
    justify-content: center;
}

.controls .signin {
    width: 73px;
    height: 24px;
    margin-right: 10px;
    line-height: 24px;
    background: #fff;
    color: #247347;
    border-radius: 2px;
}

.tabs {
    height: 38px;
    display: grid;
    grid-template-columns: 75px 76px 70px 114px 97px 62px 80px 65px 98px 115px 65px 113px 270px 1fr;
    background: #247347;
    color: #fff;
    margin: 0 -1px;
}

.tabs .active {
    background: #f3f3f3;
    color: #247347;
}

.tell {
    display: flex;
    align-items: center;
    padding-left: 20px;
    gap: 17px;
}

.comment {
    justify-self: end;
    margin-right: 19px;
}

/* ribbon */
.ribbon {
    height: 115px;
    padding: 5px 0;
    display: flex;
    background: #f3f3f3;
    border-bottom: 1px solid #d0d0d2;
}

.group {
    display: flex;
    flex-direction: column;
    border-right: 1px solid #b4b4b4;
}

.group p {
    text-align: center;
    line-height: 8px;
}

.body {
    flex: 1;
    display: flex;
    align-items: flex-start;
}

.big {
    width: 64px;
    display: flex;
    flex-direction: column;
    align-items: center;
    text-align: center;
}

.big .ic {
    margin: 4px 0;
    height: 38px;
}

.big.boxed .ic {
    margin: 0 0 6px;
}

.big.boxed {
    width: 100%;
}

.grey {
    color: #6e6e6e;
}

.stack {
    display: flex;
    flex-direction: column;
}

.stack button {
    height: 29px;
    padding-bottom: 2px;
    display: flex;
    align-items: center;
    gap: 4px;
}

.stack svg {
    width: 20px;
    height: 20px;
}

.ribbon button:disabled {
    color: #b5b0b2;
}

.g-external { width: 101px; }
.g-transform { width: 216px; }
.g-connections { width: 195px; }
.g-sort { width: 266px; }
.g-tools { width: 161px; }
.g-forecast { width: 155px; }
.g-outline { width: 71px; }
.g-analyze { width: 143px; }
.g-kutools { width: 140px; }

.g-transform .big {
    width: 66px;
    margin-left: 7px;
}

.g-connections .big {
    margin-left: 5px;
}

.az {
    display: flex;
    flex-direction: column;
    gap: 14px;
    padding: 10px 0 0 15px;
}

.az button {
    height: 24px;
    line-height: 24px;
}

.az svg {
    display: block;
}

.sa, .sz {
    font: bold 10px "Liberation Sans", sans-serif;
    fill: #3d76b8;
}

.sz {
    fill: #8a5bab;
}

.sort .sa, .sort .sz {
    font-size: 11px;
}

.big.sort {
    width: 50px;
    margin-left: 4px;
}

.line {
    width: 1px;
    height: 68px;
    margin: 8px 2px 0 7px;
    background: #d0d0d0;
}

.big.filter {
    width: 58px;
}

.g-sort .stack {
    margin-left: 2px;
}

.g-tools .big {
    width: 76px;
    margin-left: 4px;
}

.minis {
    display: grid;
    grid-template-columns: 47px 21px;
    grid-auto-rows: 29px;
    align-items: center;
    justify-items: start;
}

.minis button {
    display: flex;
    align-items: center;
    gap: 8px;
    padding-bottom: 2px;
}

.minis svg:not(.caret) {
    width: 20px;
    height: 20px;
}

.big.whatif {
    width: 72px;
    margin-left: 10px;
}

.big.sheet-b {
    width: 64px;
}

.g-analyze .stack {
    padding-left: 13px;
}

.big.combine {
    width: 72px;
    margin-left: 8px;
}

.big.split {
    width: 48px;
}

.collapse {
    align-self: flex-end;
    margin: 0 10px -5px auto;
}

/* formula bar */
.formula {
    height: 59px;
    padding: 13px 6px;
    display: flex;
    align-items: center;
}

.namebox, .fx, .bar {
    height: 33px;
    display: flex;
    align-items: center;
    background: #fff;
    border: 1px solid #cbcbce;
}

.namebox {
    width: 128px;
    padding: 0 8px;
    font-size: 15px;
}

.namebox input {
    flex: 1;
    padding: 0;
}

.dots {
    width: 3px;
    height: 13px;
    margin: 0 17px;
    border-left: 3px dotted #aaa;
}

.fx {
    width: 138px;
    justify-content: space-around;
    margin-right: 4px;
}

.fn {
    font: italic bold 16px "Liberation Serif", serif;
    color: #666;
}

.bar {
    flex: 1;
    padding-right: 4px;
}

.bar input {
    flex: 1;
}

/* grid */
.sheet {
    flex: 1;
    min-height: 0;
    display: flex;
}

.gridwrap {
    flex: 1;
    overflow: hidden;
    border-right: 1px solid #999;
}

.grid {
    width: 100%;
    table-layout: fixed;
    border-collapse: collapse;
    background: #fff;
    color: #222;
    font: 14px/17px "Open Sans", "Noto Sans", sans-serif;
}

.grid th {
    padding: 0;
    font: 14px/17px "Open Sans", sans-serif;
    background: #e6e6e8;
    border-right: 1px solid #b8b8b8;
    border-bottom: 1px solid #d0d0d0;
}

.grid thead th {
    height: 19px;
    line-height: 16px;
    padding-bottom: 1px;
    border-bottom: 1px solid #999;
}

.grid .hot {
    background: #d0d0d0;
    color: #247347;
    border-right: 2px double #247347;
}

.grid thead .hot {
    border-right: 1px solid #b8b8b8;
    border-bottom: 2px solid #247347;
}

.grid .corner {
    background: linear-gradient(to bottom right, transparent 50%, #b4b4b4 50%) 14px 5px / 11px 11px no-repeat #e6e6e8;
}

.grid td {
    padding: 0 2px;
    border: 1px solid #d4d4d4;
    white-space: pre;
    vertical-align: bottom;
}

.grid .open {
    border-right: none;
}

.grid .open + td {
    border-left: none;
}

.grid .box {
    border: 1px double #000;
}

.grid .box.open {
    border-right: none;
}

.grid .box.over {
    border-right-color: transparent;
    position: relative;
    z-index: 1;
}

.grid .bold { font: bold 14px/17px Lato, "Open Sans", sans-serif; }
.grid .math { font-size: 13px; }
.grid .mid { text-align: center; padding: 0; }
.grid .right { text-align: right; }
.grid .yellow { background: #ff0; }
.grid .green { background: #d8e2bd; }
.grid .pink { background: #e4b4b8; }

.grid sup {
    font-size: 9px;
    line-height: 0;
}

.sel {
    position: relative;
}

.select {
    position: absolute;
    inset: -2px;
    border: 2px solid #247347;
}

.select::after {
    content: "";
    position: absolute;
    right: -4px;
    bottom: -4px;
    width: 6px;
    height: 6px;
    background: #247347;
}

.cursor {
    position: absolute;
    left: 46px;
    top: 14px;
    width: 16px;
    height: 25px;
    z-index: 2;
}

.vscroll {
    width: 26px;
    display: flex;
    flex-direction: column;
    padding: 2px 4px 0;
}

.vscroll button, .hscroll button {
    width: 18px;
    height: 18px;
    display: flex;
    align-items: center;
    justify-content: center;
    background: #fff;
    border: 1px solid #999;
}

.thumb {
    background: #fff;
    border: 1px solid #999;
}

.vscroll .thumb {
    height: 412px;
}

.vscroll .end {
    margin-top: auto;
}

/* sheet names */
.sheetbar {
    height: 36px;
    display: flex;
    align-items: flex-start;
    border-top: 1px solid #aaa;
    border-bottom: 1px solid #c8c8ca;
    font-size: 15px;
    color: #555;
}

.move {
    width: 36px;
    height: 34px;
}

.move:first-child {
    margin-left: 19px;
}

.current {
    margin-left: 34px;
    width: 88px;
    height: 31px;
    background: #fff;
    color: #247347;
    font-weight: 700;
    border-bottom: 2px solid #247347;
}

.name + .name {
    height: 24px;
    margin-top: 4px;
    border-right: 1px solid #aaa;
}

.s-thermo { width: 121px; }
.s-komp { width: 107px; }
.s-pupuk { width: 78px; }
.s-one { width: 80px; }

.add {
    width: 103px;
    height: 34px;
}

.add svg {
    vertical-align: middle;
}

.sheetbar .dots {
    margin: 11px 18px 0 auto;
}

.hscroll {
    width: 37%;
    margin: 8px 26px 0 0;
    display: flex;
    background: #f3f3f3;
}

.hscroll .thumb {
    flex: 1;
    margin-right: 24px;
}

/* status bar */
.status {
    height: 26px;
    display: flex;
    align-items: center;
    background: #f3f3f3;
    color: #444;
}

.ready {
    width: 71px;
    padding-left: 10px;
}

.access {
    display: flex;
    align-items: center;
    gap: 3px;
}

.views {
    margin-left: auto;
    display: flex;
}

.views button {
    width: 50px;
    height: 26px;
    display: flex;
    align-items: center;
    justify-content: center;
}

.views .on {
    background: #c8c6c8;
}

.zoom {
    width: 238px;
    display: flex;
    align-items: center;
}

.zoom button {
    width: 22px;
    font-size: 18px;
}

.zoom input {
    width: 124px;
    height: 16px;
    margin: 0 1px;
    appearance: none;
    background: linear-gradient(#444, #444) 62px 50% / 1px 7px no-repeat, linear-gradient(#444, #444) 0 50% / 100% 1px no-repeat;
}

.zoom input::-webkit-slider-thumb {
    appearance: none;
    width: 6px;
    height: 14px;
    background: #444;
}

.zoom span {
    margin-left: 10px;
    font-size: 13px;
}

.toast {
    position: absolute;
    left: 682px;
    top: 434px;
    width: 550px;
    height: 65px;
    line-height: 65px;
    text-align: center;
    font-size: 17px;
    color: #eee;
    background: #5b5b5b;
    border: 1px solid #4a4a4a;
    border-radius: 2px;
}

/* right column */
.handle {
    width: 4px;
    height: 26px;
    align-self: center;
    margin: 0 13px 0 4px;
    border: 1px solid #aaa;
    border-width: 0 1px;
}

.people {
    width: 368px;
    display: flex;
    flex-direction: column;
    justify-content: center;
    gap: 6px;
}

.tile {
    position: relative;
    aspect-ratio: 16 / 9;
    display: flex;
    align-items: center;
    justify-content: center;
    background: #222;
    color: #fff;
}

.talking::before {
    content: "";
    position: absolute;
    inset: -4px;
    border: 4px solid;
    border-image: linear-gradient(#dce878 4%, #80e600 44%, #5cbc14 52%, #7fc93c 70%, #ffff80 96%) 4;
}

.tile h2 {
    font: bold 24px/32px "Noto Sans", sans-serif;
}

.tile p {
    position: absolute;
    left: 0;
    bottom: 0;
    height: 20px;
    padding: 0 4px;
    display: flex;
    align-items: center;
    gap: 5px;
    font: 12px/20px "Noto Sans", sans-serif;
    background: #2a2a2a;
}

.tile p svg {
    width: 13px;
    height: 13px;
}

.avatar {
    width: 96px;
    height: 96px;
    background: #5c4038;
    font: bold 32px/96px "Noto Sans", sans-serif;
    text-align: center;
}

/* meeting toolbar */
.toolbar {
    height: 93px;
    display: grid;
    grid-template-columns: 33.2% 1fr auto;
    align-items: end;
    position: relative;
    padding: 0 12px 5px 0;
    font: 11px/16px "Noto Sans", sans-serif;
    color: #c4c4c4;
}

.pen {
    position: absolute;
    left: 18px;
    top: -13px;
    width: 40px;
    height: 40px;
    border-radius: 50%;
    background: #14181af0;
    border: 1px solid #26303a;
    display: flex;
    align-items: center;
    justify-content: center;
}

.tools {
    display: flex;
    padding-left: 18px;
}

.center {
    padding-left: 0;
}

.tool {
    position: relative;
    display: flex;
    flex-direction: column;
    align-items: center;
    gap: 3px;
}

.more + .tool, .tool + .tool {
    margin-left: 22px;
}

.more {
    width: 10px;
    height: 24px;
    color: #aaa;
}

.more svg {
    width: 10px;
    height: 8px;
}

.t-mute { width: 55px; }
.t-video { width: 66px; }
.t-people { width: 80px; }
.tool.t-chat { width: 56px; margin-left: 42px; }
.t-share { width: 66px; color: #23d959; }
.t-record { width: 53px; }
.t-rooms { width: 86px; }
.t-react { width: 52px; }
.t-apps { width: 48px; }
.t-board { width: 64px; }

.tool.t-apps {
    margin-left: 30px;
}

.t-apps svg {
    fill: none;
    stroke: #aaa;
    stroke-width: 1.5px;
}

.count {
    position: absolute;
    left: 56px;
    top: 1px;
    font-size: 12px;
    font-weight: 400;
}

.badge {
    position: absolute;
    left: 54px;
    top: 2px;
    width: 16px;
    border-radius: 5px;
    background: #ff3b3b;
    color: #fff;
}

.leave {
    width: 92px;
    height: 27px;
    margin-bottom: 8px;
    border-radius: 8px;
    background: #0e5fc8;
    color: #fff;
    font: 600 12px/27px "Open Sans", sans-serif;
}

.tip {
    position: absolute;
    left: 931px;
    bottom: 68px;
    width: 254px;
    height: 48px;
    padding: 11px 14px;
    font: 12px/20px "Noto Sans", sans-serif;
    color: #ddd;
    background: #222222e0;
    border: 1px solid #2c2c2c;
}

.tip::after {
    content: "";
    position: absolute;
    left: 119px;
    top: 47px;
    border: 8px solid transparent;
    border-top-color: #2a2a2a;
}
```
